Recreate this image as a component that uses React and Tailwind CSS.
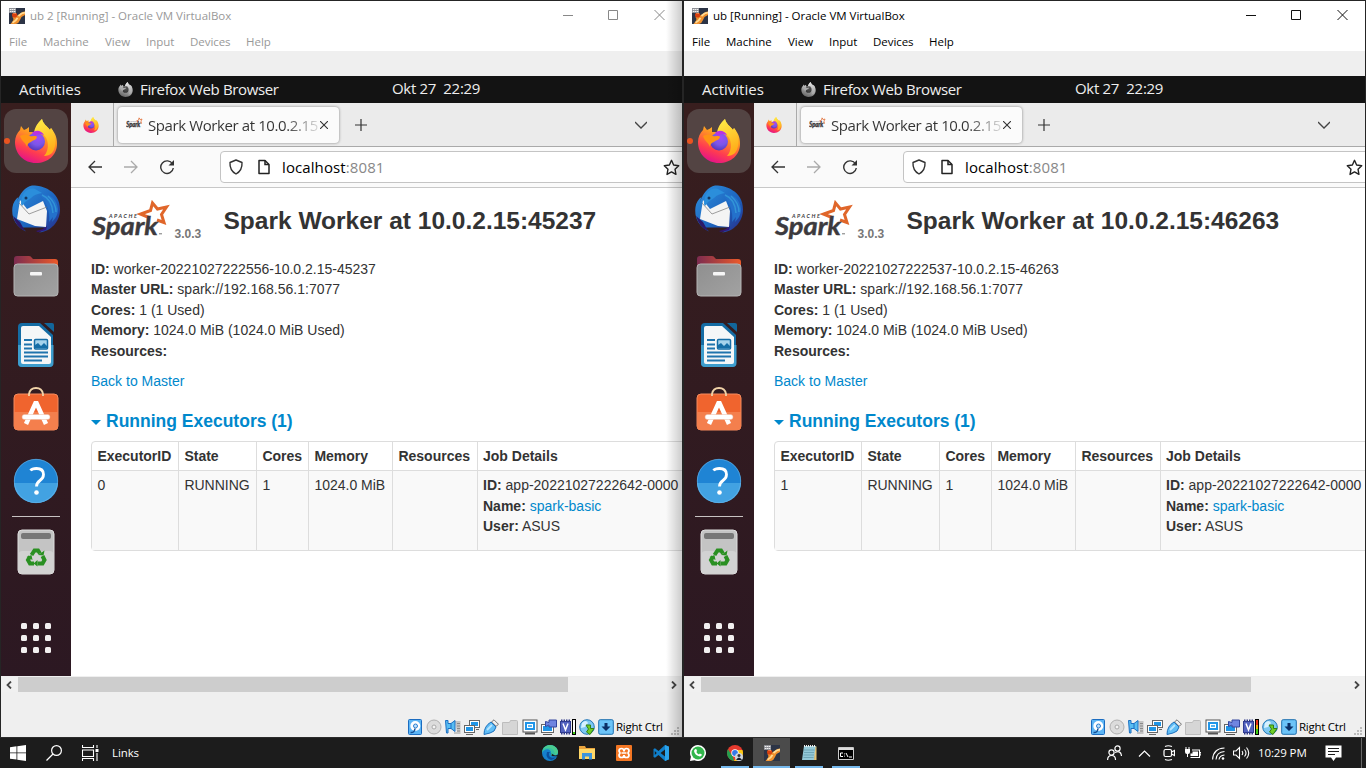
import React from "react";

const UI = "font-['Open_Sans',sans-serif]";

function VBoxIcon() {
  return (
    <svg className="size-4 shrink-0" viewBox="0 0 16 16">
      <rect width="16" height="16" fill="#2c3446" />
      <path d="M16 3.500q-3 0-4.500 2L8 7.500 5.500 9H3.500l1 2q0 2-3 5h5.500q3-1 4-4l1.500-3L16 7z" fill="#f0902e" />
      <path d="M9.500 8l3-2.500L16 4.500M3.500 14.800q3.500-1.800 5-5" stroke="#ffdb93" strokeWidth="1.800" fill="none" />
      <circle cx="5.600" cy="7" r="2.600" fill="#d8400f" />
      <path d="M4.500 5.500q1.500-.8 2.500 0" stroke="#ffa060" strokeWidth=".9" fill="none" />
      <rect x="0" y="0" width="7" height="5" fill="#8d8f95" />
      <path d="M.8 1.500h5.500M.8 3.500h5.500" stroke="#f2f2f2" strokeWidth="1.100" strokeDasharray="1.500 .5" />
    </svg>
  );
}

function Firefox({ size, mono, id }) {
  return (
    <svg className={size} viewBox="0 0 44 44">
      <defs>
        <linearGradient id={"fa" + id} x1=".75" y1="0" x2=".35" y2="1">
          <stop offset="0" stopColor={mono ? "#eee" : "#fff34f"} />
          <stop offset=".4" stopColor={mono ? "#bbb" : "#ff9a20"} />
          <stop offset=".75" stopColor={mono ? "#888" : "#ff3c50"} />
          <stop offset="1" stopColor={mono ? "#666" : "#e3128a"} />
        </linearGradient>
        <radialGradient id={"fb" + id} cx=".6" cy=".3" r=".8">
          <stop offset="0" stopColor={mono ? "#555" : "#a04cf5"} />
          <stop offset=".5" stopColor={mono ? "#444" : "#7a56e8"} />
          <stop offset="1" stopColor={mono ? "#333" : "#4a2fae"} />
        </radialGradient>
        <linearGradient id={"fc" + id} x1="0" y1="0" x2=".3" y2="1">
          <stop offset="0" stopColor={mono ? "#eee" : "#fff04a"} />
          <stop offset="1" stopColor={mono ? "#aaa" : "#ffae1a"} />
        </linearGradient>
      </defs>
      <path d="M28 0c1 5 5 7 8 11l1-2c4 5 6 9 6 16 0 11-9 19-21 19S1 35 1 23c0-5 2-9 5-12l1-4 3 4q3-1 5-3l0 5h6c1-7 4-10 7-13z" fill={`url(#fa${id})`} />
      <path d="M28 0c1 5 5 7 8 11l1-2c4 6 7 17 1 25-2 2-5 3-8 3 6-6 5-19-2-22-3-1-6-2-8 0 0-7 5-12 8-15z" fill={`url(#fc${id})`} />
      <circle cx="22" cy="22.500" r="9" fill={`url(#fb${id})`} />
      <path d="M6 17c4-2 8-2 10 0 3 1 6-1 7 1-1 4-5 3-6 5-4 1-4 5-4 5-1-4-5-5-7-11z" fill={mono ? "#aaa" : "#ff9415"} />
      <path d="M18 14c4-4 10-2 12 2l-4-1q-3 0-5 2z" fill={mono ? "#777" : "#b833e1"} />
    </svg>
  );
}

function Thunderbird() {
  return (
    <svg className="h-12 w-12" viewBox="0 0 48 48">
      <defs>
        <linearGradient id="tb" x1="0" y1="0" x2="1" y2="1">
          <stop offset="0" stopColor="#2f93e0" />
          <stop offset=".6" stopColor="#1c62bd" />
          <stop offset="1" stopColor="#2a2a86" />
        </linearGradient>
      </defs>
      <path d="M20 .5c8-.5 28 4 28 24 0 12-9 22-21 23 3-2 5-3 6-5H10l4 4C4 42-1 33 .5 22c.5-4 3-8 6-10L5 17C8 8 13 2 20 .5z" fill="url(#tb)" />
      <path d="M1 31q3 11 12 15l-5-9z" fill="#2b1968" />
      <path d="M5 34L8 15l7 9 16-8 4 10-1 16-11-1z" fill="#f4f4f4" />
      <path d="M7 18l10 11 18-7" fill="none" stroke="#777" strokeWidth=".7" />
      <path d="M9 19C9 8 16 2 23 4l7 4c-5 1-8 2-11 5l-6 4-3 4z" fill="#2b8edb" />
      <circle cx="14" cy="13" r="1.500" fill="#143763" />
      <path d="M27 10c8-3 18 2 19 14 0 6-3 10-6 13l1-5-4 5q1-9-2-16-3-8-8-11z" fill="#2471cb" />
      <path d="M30 10q10 4 11 18M36 11q8 7 8 16" stroke="#3bacdf" strokeWidth="1.500" fill="none" opacity=".6" />
      <path d="M24 46q7-1 11-5l-1 4-8 2z" fill="#32177a" />
    </svg>
  );
}

function Files() {
  return (
    <svg className="h-[42px] w-[46px]" viewBox="0 0 46 42">
      <defs>
        <linearGradient id="fo" x1="0" y1="0" x2="1" y2="0">
          <stop offset="0" stopColor="#7c2c50" />
          <stop offset="1" stopColor="#ec5a2a" />
        </linearGradient>
        <linearGradient id="fg" x1="0" y1="0" x2="1" y2="1">
          <stop offset="0" stopColor="#8f8f8f" />
          <stop offset="1" stopColor="#a2a2a2" />
        </linearGradient>
      </defs>
      <path d="M1 14V4q0-3 3-3h12q2 0 3 2l1 1h22q3 0 3 3v8z" fill="url(#fo)" />
      <rect x="1" y="9" width="44" height="32" rx="3.500" fill="url(#fg)" stroke="#b5b5b5" strokeWidth="1" />
      <rect x="17" y="17" width="12" height="3.500" rx="1" fill="#f6f6f6" />
    </svg>
  );
}

function Writer() {
  return (
    <svg className="h-[46px] w-[38px]" viewBox="0 0 38 46">
      <path d="M5 1h18l13 12v28q0 4-4 4H5q-4 0-4-4V5q0-4 4-4z" fill="#146ca4" />
      <path d="M1 23h35.500v18q0 4-4 4H5q-4 0-4-4z" fill="#3d9dcd" />
      <path d="M6 4h16l12 11v25q0 2-2 2H6q-2 0-2-2V6q0-2 2-2z" fill="#f5f7f8" />
      <path d="M27 1h8q2 0 2 2v7z" fill="#12669b" />
      <path d="M7 18h8M7 22.500h8M7 26.500h8M7 30.500h24M7 34.500h24M7 38.500h18" stroke="#1f74ad" strokeWidth="1.800" />
      <rect x="17.500" y="17.500" width="13" height="9.500" rx="1" fill="#a6d3ec" stroke="#156da6" strokeWidth="1.500" />
      <path d="M18 26v-3l3-2 3 3 3-3 3 3v2z" fill="#156da6" />
    </svg>
  );
}

function Software() {
  return (
    <svg className="h-11 w-[46px]" viewBox="0 0 46 44">
      <rect x="1" y="7" width="44" height="36" rx="4" fill="#f0642e" stroke="#f58b5e" strokeWidth="1" />
      <path d="M1 25h44v14q0 4-4 4H5q-4 0-4-4z" fill="#f47f4d" />
      <path d="M16 9V7q1-6 7-6t7 6v2" fill="none" stroke="#f1d3a8" strokeWidth="1.800" />
      <path d="M13 37l10-22 10 22" fill="none" stroke="#fff" strokeWidth="4.500" strokeLinejoin="bevel" />
      <rect x="9" y="27.500" width="28" height="5" rx="2.500" fill="#fff" stroke="#e8b59d" strokeWidth=".5" />
    </svg>
  );
}

function Trash() {
  return (
    <svg className="h-[46px] w-[38px]" viewBox="0 0 38 46">
      <rect x="1" y="1" width="36" height="44" rx="4" fill="#c4c4c4" stroke="#dedede" />
      <rect x="1.500" y="22" width="35" height="22.500" rx="4" fill="#d2d2d2" />
      <rect x="4" y="4" width="30" height="6" rx="2" fill="#777" />
      <g fill="none" stroke="#2a9022" strokeWidth="4">
        <path d="M14.500 26l3-4.500h3.500l2 3" />
        <path d="M25.500 27l2 4-2 3.500h-5" />
        <path d="M17 34.500h-4L11 31l2-3.500" />
      </g>
      <path d="M21 26l5.500.5 1-5zM20.500 31v6.500l-4-3zM9.500 28l5-2 1 5z" fill="#2a9022" />
    </svg>
  );
}

function Dock() {
  return (
    <div className="relative flex h-[573px] w-[70px] shrink-0 flex-col items-center bg-linear-to-b from-[#381e1e] to-[#2c1822]">
      <div className="mt-1.5 flex size-16 shrink-0 items-center justify-center rounded-xl bg-[#534443]">
        <Firefox size="h-11 w-11" id="d" />
      </div>
      <i className="absolute top-[35px] left-[3px] size-[6px] rounded-full bg-[#e95420]" />
      <div className="mt-3"><Thunderbird /></div>
      <div className="mt-[22px]"><Files /></div>
      <div className="mt-[25px]"><Writer /></div>
      <div className="mt-[19px]"><Software /></div>
      <svg className="mt-[27px] size-[46px] shrink-0" viewBox="0 0 46 46">
        <circle cx="23" cy="23" r="22" fill="#1f84d4" />
        <path d="M1 25h44a22 20 0 0 1-44 0z" fill="#42a2e2" />
        <circle cx="23" cy="23" r="21.700" fill="none" stroke="#6cb7ea" strokeWidth=".6" />
        <path d="M17.500 12.500q1.500-2 6-2 7 0 7 6 0 3.500-3.500 6-3.500 2.500-3.500 6" fill="none" stroke="#fff" strokeWidth="2.800" />
        <circle cx="23.500" cy="34.500" r="2.300" fill="#fff" />
      </svg>
      <i className="mt-3 h-px w-12 shrink-0 bg-[#c8c2c2]" />
      <div className="mt-3"><Trash /></div>
      <div className="mt-12 grid grid-cols-3 gap-1.5">
        {[0, 1, 2, 3, 4, 5, 6, 7, 8].map((n) => (
          <i key={n} className="size-1.5 rounded-[1.5px] bg-[#f2f0f0]" />
        ))}
      </div>
    </div>
  );
}

function SparkLogo({ size, fit = "xMidYMid", bold = 0.4 }) {
  return (
    <svg className={size} viewBox="0 0 80 42" preserveAspectRatio={fit}>
      <path d="M58 17.500L49.500 14l10-3.500 2-7.500 5 6 9-2-5 7.500 2.500 8L66 20" fill="none" stroke="#e0662a" strokeWidth="3" strokeLinejoin="miter" />
      <text x="18" y="18" fontFamily="Lato" fontWeight="700" fontStyle="italic" fontSize="5.500" fill="#3c3a3e" textLength="28">APACHE</text>
      <text x="1" y="34.500" fontFamily="Lato" fontWeight="700" fontStyle="italic" fontSize="25" fill="#3c3a3e" stroke="#3c3a3e" strokeWidth={bold} textLength="66" lengthAdjust="spacingAndGlyphs">Spark</text>
      <path d="M68 33.800h3" stroke="#777" />
    </svg>
  );
}

function StatusIcons({ active }) {
  const mon = (x, y, w, h) => (
    <g>
      <rect x={x} y={y} width={w} height={h} fill="#fff" stroke="#666" />
      <rect x={x + 1.5} y={y + 1.5} width={w - 3} height={h - 3} fill="#1f95e6" />
    </g>
  );
  return (
    <div className="flex items-center gap-[3.1px]">
      <svg className="size-4" viewBox="0 0 16 16"><rect x="1.500" y=".5" width="13" height="15" rx="1" fill="#5cb5f5" stroke="#1b6cc0" /><circle cx="8.300" cy="7" r="5" fill="#fff" /><circle cx="8.500" cy="7" r="2" fill="#bfe0fa" stroke="#2a7fd0" /><path d="M3.500 13.500q4 .5 4.500-4" stroke="#164f94" strokeWidth="1.500" fill="none" /></svg>
      <svg className="size-4" viewBox="0 0 16 16"><circle cx="8" cy="8" r="7" fill="#dcdcdc" stroke="#b0b0b0" /><circle cx="8" cy="8" r="2" fill="#f5f5f5" stroke="#aaa" /></svg>
      <svg className="size-4" viewBox="0 0 16 16"><path d="M10 2h5.500v13H9v-2h3z" fill="#c4c4c4" /><path d="M12 4.500h3M12 7h3M12 9.500h3M12 12h3" stroke="#8a8a8a" /><path d="M.5 1.500h2.500v3h3l4-3v11l-4-3H3v4.500H1.500z" fill="#58bdf2" stroke="#1c6fc2" /><path d="M6 4.500v5" stroke="#1c6fc2" /></svg>
      <svg className="size-4" viewBox="0 0 16 16">{mon(5.5, 1.5, 10, 7)}{mon(0.5, 6.5, 10, 7)}<path d="M2 15.500h7M12 10.500h3" stroke="#666" /></svg>
      <svg className="size-4" viewBox="0 0 16 16"><path d="M11 .8l4.500 4.500-2.500 2L8.500 3z" fill="#eee" stroke="#777" /><path d="M8 3l5 5q-1 5-6 6l-6 1.500Q1 7 8 3z" fill="#60bdf5" stroke="#1c70bd" /><path d="M4 11l5-5" stroke="#b9e5ff" strokeWidth="1.800" /></svg>
      <svg className="size-4" viewBox="0 0 16 16"><path d="M.5 3.500h7l1-2h6q1 0 1 1v13H.5z" fill="#d6d6d6" stroke="#bdbdbd" /></svg>
      <svg className="size-4" viewBox="0 0 16 16"><rect x="1" y="1" width="14" height="12" fill="#fff" stroke="#555" /><rect x="3" y="3" width="10" height="8" fill="#2095e8" /><rect x="5.500" y="5.500" width="5" height="3" fill="#56b4f2" stroke="#fff" /><path d="M3 14.500h10" stroke="#555" strokeWidth="2" /></svg>
      <svg className="size-4" viewBox="0 0 16 16">{mon(0.5, 5.5, 12, 8)}<path d="M2 15.500h9" stroke="#555" /><path d="M8 1h7.500v7H8V6L4.500 7.500v-5L8 3.500z" fill="#6f85e0" stroke="#34479f" /></svg>
      <svg className="size-4" viewBox="0 0 16 16">
        <path d="M1 1.500h10M1 14.500h10" stroke="#2c3787" strokeWidth="2" strokeDasharray="1.500 1" />
        <rect x=".5" y="2.500" width="10" height="11" fill="#5262bf" stroke="#303c90" />
        <path d="M3 4.500L5.500 11 8 4.500" stroke="#fff" strokeWidth="1.500" fill="none" />
        <rect x="12.500" y=".5" width="3" height="15" fill={active ? "#f0b000" : "#fff"} stroke="#000" />
        {active && <path d="M14 1v5" stroke="#e8301c" strokeWidth="2" />}
        <path d={active ? "M14 10v5" : "M14 13v2"} stroke="#3ccc14" strokeWidth="2" />
      </svg>
      <svg className="size-4" viewBox="0 0 16 16"><circle cx="8" cy="8" r="7.300" fill="#7cc8f2" stroke="#2477b8" /><path d="M3 4q4-4 6 0l-3 4-4 1z" fill="#d6f0ff" /><path d="M7 6h4.500v3.500H15L11 15.500 7.500 13l2-3z" fill="#6fce26" stroke="#338014" /></svg>
      <svg className="size-4" viewBox="0 0 16 16"><rect x=".7" y=".7" width="14.600" height="14.600" rx="1.500" fill="#6cc4f8" stroke="#1d6fae" /><path d="M6.500 4h3v3.500h3L8 12 3.500 7.500h3z" fill="#0b2f66" /></svg>
    </div>
  );
}

function Line({ label, children }) {
  return <div><b>{label}</b>{children ? " " : ""}{children}</div>;
}

function VMWindow({ active, title, port, worker, exec }) {
  const ink = active ? "text-black" : "text-[#999]";
  const stroke = active ? "#111" : "#888";
  const th = "border-r border-[#ddd] pl-[5.4px]";
  return (
    <section className="relative flex h-[737px] w-[683px] flex-col overflow-hidden border-x border-t border-[#252525] bg-[#efefef]">
      <header className={`${UI} ${ink} h-[50px] shrink-0 bg-white`}>
        <div className="flex h-[29px] items-center">
          <div className="flex flex-1 items-center gap-[5px] pl-2">
            <VBoxIcon />
            <span className="text-[11.5px] tracking-[-0.01px] whitespace-nowrap">{title}</span>
          </div>
          <svg className="mr-[17px] h-3 w-[104px]" viewBox="0 0 104 12" fill="none" stroke={stroke}>
            <path d="M2 5.500h10M47.500 .5h9v9h-9zM93.500 0l10 10M103.500 0l-10 10" />
          </svg>
        </div>
        <nav className="flex h-[22px] items-center pt-px pl-2 text-[11.5px]">
          <span className="w-[34px]">File</span>
          <span className="w-[62px]">Machine</span>
          <span className="w-[41px]">View</span>
          <span className="w-[44px]">Input</span>
          <span className="w-[56px] tracking-[-0.05px]">Devices</span>
          <span>Help</span>
        </nav>
      </header>
      <div className={`${UI} mt-[25px] flex h-[27px] shrink-0 items-center bg-[#131313] text-[15px] text-[#eee]`}>
        <span className="w-[117px] pl-[18px]">Activities</span>
        <Firefox size="h-[15px] w-[15px]" mono id="m" />
        <span className="w-[259px] pl-[7px] tracking-[-0.36px]">Firefox Web Browser</span>
        <span className="pb-0.5 tracking-[-0.3px] whitespace-pre">Okt 27  22:29</span>
      </div>
      <div className="flex h-[573px] shrink-0">
        <Dock />
        <main className="flex w-[611px] flex-col overflow-hidden bg-white">
          <div className="flex h-11 shrink-0 items-center border-b border-[#a9a9a9] bg-[#ebebeb]">
            <div className="flex h-full w-[43px] items-center border-r border-[#aaa] pl-3">
              <Firefox size="h-4 w-4" id="t" />
            </div>
            <div className="ml-1 flex h-9 w-[221px] items-center rounded bg-[#fbfbfb] pl-2 shadow-[0_0_3px_rgba(0,0,0,.45)]">
              <SparkLogo size="h-3 w-[17px] shrink-0 mb-1" fit="none" bold={1.5} />
              <span className={`${UI} mt-0.5 ml-[5px] w-[171px] shrink-0 overflow-hidden bg-linear-to-r from-[#333] from-80% to-transparent to-103% bg-clip-text text-[15px] tracking-[-0.4px] whitespace-nowrap text-transparent`}>Spark Worker at 10.0.2.15</span>
              <svg className="ml-px size-2 shrink-0" viewBox="0 0 8 8"><path d="M0 0l8 8M8 0L0 8" stroke="#333" strokeWidth="1.100" /></svg>
            </div>
            <svg className="ml-4 size-3" viewBox="0 0 12 12"><path d="M6 0v12M0 6h12" stroke="#333" strokeWidth="1.200" /></svg>
            <svg className="ml-[268px] h-2 w-3" viewBox="0 0 12 8"><path d="M0 1l6 6 6-6" stroke="#444" strokeWidth="1.300" fill="none" /></svg>
          </div>
          <div className="flex h-[41px] shrink-0 items-center border-b border-[#c8c8c8] bg-[#fafafa]">
            <svg className="ml-[17px] h-4 w-[14px] shrink-0" viewBox="0 0 14 16" fill="none" stroke="#333" strokeWidth="1.300"><path d="M14 8H1M7 2L1 8l6 6" /></svg>
            <svg className="ml-[22px] h-4 w-[14px] shrink-0" viewBox="0 0 14 16" fill="none" stroke="#aaa" strokeWidth="1.300"><path d="M0 8h13M7 2l6 6-6 6" /></svg>
            <svg className="ml-[21px] size-4 shrink-0" viewBox="0 0 16 16" fill="none" stroke="#333" strokeWidth="1.400"><path d="M13.500 5A6.300 6.300 0 1 0 14.300 9" /><path d="M15 1v5.500H9.500z" fill="#333" stroke="none" /></svg>
            <div className="ml-[45px] flex h-8 w-[500px] shrink-0 items-center rounded border border-[#c4c4c4] bg-white pl-[7px]">
              <svg className="size-4 shrink-0" viewBox="0 0 16 16" fill="none" stroke="#333" strokeWidth="1.400"><path d="M8 1l6 2.500q.5 8-6 11.500-6.500-3.500-6-11.500z" strokeLinejoin="round" /></svg>
              <svg className="ml-3 size-4 shrink-0" viewBox="0 0 16 16" fill="none" stroke="#222" strokeWidth="1.500"><path d="M3 1.500h6l4 4v9H3z" strokeLinejoin="round" /><path d="M9 1.500v4h4" /></svg>
              <span className={`${UI} ml-2.5 w-[381px] text-[15px] tracking-[0.1px] text-black`}>localhost<span className="text-[#888]">:8081</span></span>
              <svg className="size-[17px] shrink-0" viewBox="0 0 16 16">
                <path d="M8 1.200l2 4.500 4.800.6-3.500 3.300.9 4.900L8 12.100l-4.200 2.400.9-4.900L1.200 6.300 6 5.700z" fill="none" stroke="#222" strokeWidth="1.300" strokeLinejoin="round" />
              </svg>
            </div>
          </div>
          <article className="w-[740px] pl-5 font-['Liberation_Sans',Arial,sans-serif] text-sm leading-[20.4px] text-[#333]">
            <div className="flex h-[71px] items-start pt-3">
              <SparkLogo size="h-[42px] w-20" />
              <span className="mt-6 ml-[3.5px] w-[49px] text-xs leading-5 font-bold text-[#777]">3.0.3</span>
              <h1 className="text-[24.5px] leading-[42px] font-bold">Spark Worker at 10.0.2.15:{port}</h1>
            </div>
            <div>
              <Line label="ID:">{worker}</Line>
              <Line label="Master URL:">spark://192.168.56.1:7077</Line>
              <Line label="Cores:">1 (1 Used)</Line>
              <Line label="Memory:">1024.0 MiB (1024.0 MiB Used)</Line>
              <Line label="Resources:" />
            </div>
            <p className="mt-[10px] text-[#0088cc]">Back to Master</p>
            <h2 className="mt-5 flex items-center text-[17.5px] leading-[21px] font-bold text-[#0088cc]">
              <svg className="mt-0.5 mr-[5px] h-[5px] w-2.5" viewBox="0 0 10 5"><path d="M0 0h10L5 5z" fill="#0088cc" /></svg>
              Running Executors (1)
            </h2>
            <div className="mt-[9px] rounded border border-[#ddd]">
              <div className="grid h-7 grid-cols-[87px_78px_52px_84px_85px_1fr] leading-7 font-bold">
                <span className={th}>ExecutorID</span>
                <span className={th}>State</span>
                <span className={th}>Cores</span>
                <span className={th}>Memory</span>
                <span className={th}>Resources</span>
                <span className="pl-[5px]">Job Details</span>
              </div>
              <div className="grid h-20 grid-cols-[87px_78px_52px_84px_85px_1fr] border-t border-[#ddd] bg-[#f9f9f9] *:pt-1">
                <span className={th}>{exec}</span>
                <span className={th}>RUNNING</span>
                <span className={th}>1</span>
                <span className={th}>1024.0 MiB</span>
                <span className={th} />
                <div className="pl-[5px]">
                  <Line label="ID:">app-20221027222642-0000</Line>
                  <Line label="Name:"><span className="text-[#0088cc]">spark-basic</span></Line>
                  <Line label="User:">ASUS</Line>
                </div>
              </div>
            </div>
          </article>
        </main>
      </div>
      <div className="mt-px flex h-[15px] shrink-0 items-center bg-[#f0f0f0]">
        <svg className="mr-[6px] ml-[5px] h-2 w-1.5" viewBox="0 0 6 8"><path d="M5 .5L1.500 4 5 7.500" stroke="#444" strokeWidth="1.800" fill="none" /></svg>
        <div className="h-full w-[550px] bg-[#cdcdcd]" />
        <svg className="ml-[103px] h-2 w-1.5" viewBox="0 0 6 8"><path d="M1 .5L4.500 4 1 7.500" stroke="#444" strokeWidth="1.800" fill="none" /></svg>
      </div>
      <footer className="flex flex-1 items-end pb-[2px] pl-[406px]">
        <StatusIcons active={active} />
        <span className={`${UI} ml-0.5 w-[47px] text-[11.5px] leading-4 tracking-[-0.25px] whitespace-nowrap text-black`}>Right Ctrl</span>
        <svg className="ml-2 size-2 shrink-0" viewBox="0 0 8 8" fill="#bbb"><path d="M6 0h2v2H6zM3 3h2v2H3zM6 3h2v2H6zM0 6h2v2H0zM3 6h2v2H3zM6 6h2v2H6z" /></svg>
      </footer>
      {!active && <div className="absolute inset-y-0 right-0 w-4 bg-linear-to-r from-transparent to-black/20" />}
    </section>
  );
}

function Slot({ children, running, focused }) {
  return (
    <div className={`flex h-full w-[37px] flex-col items-center ${focused ? "bg-[#4b4b4b]" : ""}`}>
      <div className="flex flex-1 items-center pt-0.5">{children}</div>
      <div className={`h-0.5 ${focused ? "w-full" : "w-7"} ${running ? "bg-[#76b9ed]" : ""}`} />
    </div>
  );
}

function Taskbar() {
  return (
    <div className={`${UI} flex h-[31px] items-center border-t border-[#2b2b2b] bg-[#1c1c1c] text-white`}>
      <svg className="ml-2.5 size-4" viewBox="0 0 16 16" fill="#fff"><path d="M0 2.200L6.500 1.300v6.200H0zM7.300 1.200L16 0v7.500H7.300zM0 8.300h6.500v6.300L0 13.700zM7.300 8.300H16V16l-8.700-1.200z" /></svg>
      <svg className="ml-5 size-4" viewBox="0 0 16 16" fill="none" stroke="#fff" strokeWidth="1.200"><circle cx="10.500" cy="5.500" r="4.900" /><path d="M7 9L.5 15.500" /></svg>
      <svg className="ml-5 h-4 w-[17px]" viewBox="0 0 17 16" fill="none" stroke="#fff" strokeWidth="1.100"><path d="M.5 0v2.500h11V0M.5 5h11v6.500H.5zM.5 16v-2.500h11V16M15 0v3M15 8v8" /><path d="M13.500 4h3v3h-3z" fill="#fff" stroke="none" /></svg>
      <span className="ml-[13px] w-[419px] text-[11.5px] tracking-[-0.1px]">Links</span>
      <Slot>
        <svg className="size-4" viewBox="0 0 16 16"><circle cx="8" cy="8" r="8" fill="#1580cc" /><path d="M0 8C0 2 5 0 8 0c5 0 8 4 8 7 0 3-3 4-5 4-3 0-2-1-2-3 0-5-7-5-9 0z" fill="#35c1a3" /><path d="M1 4Q4 0 8 0c5 0 8 4 8 7 0 2-2 3-3 3 0-6-6-9-12-6z" fill="#50ce8a" opacity=".8" /><path d="M5 7q-2 6 4 8 3 0 5-3-6 2-7-2-.5-2 1-3z" fill="#0b4f9d" /><path d="M8.500 8q2 0 1 3l6.500.5v-1.500l-3 .5z" fill="#1c1c1c" /></svg>
      </Slot>
      <Slot>
        <svg className="size-4" viewBox="0 0 16 16"><path d="M0 1h6l1 2h9v11H0z" fill="#e8a33d" /><path d="M0 4h16v10H0z" fill="#ffd868" /><path d="M3 14.500V8h10v6.500h-3v-3H6v3z" fill="#3d94dc" /></svg>
      </Slot>
      <Slot>
        <svg className="size-4" viewBox="0 0 16 16"><rect width="16" height="16" rx="1" fill="#f37623" /><path d="M8 6.500h0Q8 3.500 5.500 3.500T3 6l1 2-1 2q0 2.500 2.500 2.500T8 10q0 2.500 2.500 2.500T13 10l-1-2 1-2q0-2.500-2.500-2.500T8 6.500zM5.500 8h5" fill="none" stroke="#fff" strokeWidth="1.700" /></svg>
      </Slot>
      <Slot>
        <svg className="size-4" viewBox="0 0 16 16"><path d="M12 0l4 1.800v12.400L12 16 5.500 10 2 12.700.5 11.900V4.100L2 3.300 5.500 6z" fill="#0f7fcb" /><path d="M12 4.500v7L7.500 8zM1.800 6v4l2-2z" fill="#1c1c1c" /><path d="M12 0l4 1.800v12.400L12 16z" fill="#2ba3ea" /></svg>
      </Slot>
      <Slot>
        <svg className="size-4" viewBox="0 0 16 16"><path d="M8 0a8 8 0 1 1-3.500 15.200L0 16l.9-4.300A8 8 0 0 1 8 0z" fill="#fff" /><circle cx="8" cy="8" r="6.500" fill="#31b64b" /><path d="M5 4.200l1.200-.1.900 2-.8 1q1 1.800 2.600 2.500l1-1 2 1q-.3 2-2 2-5-.8-5.900-5.500 0-1 1-1.900z" fill="#fff" /></svg>
      </Slot>
      <Slot running>
        <svg className="size-4" viewBox="0 0 16 16"><circle cx="8" cy="8" r="8" fill="#e63a2e" /><path d="M1 4.200L6 12l1 4A8 8 0 0 1 1 4.200z" fill="#22a04e" /><path d="M8 5h7.400A8 8 0 0 1 7 16l4-6z" fill="#fbc916" /><circle cx="8" cy="8" r="3.700" fill="#fff" /><circle cx="8" cy="8" r="2.900" fill="#3579e8" /><circle cx="12" cy="12" r="4" fill="#cfd6df" /><circle cx="12" cy="10.500" r="1.500" fill="#333" /><path d="M9 15q3-5 6 0z" fill="#151c2c" /></svg>
      </Slot>
      <Slot running focused><VBoxIcon /></Slot>
      <Slot running>
        <svg className="size-4" viewBox="0 0 16 16"><path d="M3 1h12l-1.500 14H1z" fill="#94c9d8" /><path d="M14.500 1.500h1V15H13z" fill="#e4c477" /><path d="M3 5h10.500M3 7.500h10M2.500 10h10.500M2.500 12.500h10" stroke="#5f96a8" strokeWidth=".7" /><path d="M3 1h12" stroke="#eee" strokeWidth="2" strokeDasharray="1 1" /></svg>
      </Slot>
      <Slot running>
        <svg className="h-[13px] w-4" viewBox="0 0 16 13"><path d="M.5.500h15v12H.5z" fill="#000" stroke="#ccc" /><path d="M1 1h14v2H1z" fill="#ddd" /><path d="M5 6H2.500v3.500H5M6.500 6.500v.8M6.500 8.700v.8M8 6l2 4M11 10h3" stroke="#fff" strokeWidth="1" fill="none" /></svg>
      </Slot>
      <svg className="ml-[243px] h-4 w-[15px]" viewBox="0 0 15 16" fill="none" stroke="#fff" strokeWidth="1.200"><circle cx="10.500" cy="3.500" r="2.600" /><circle cx="4.500" cy="7.500" r="2.600" /><path d="M.6 15q0-4.500 4-4.500T8.500 15M8 7.500q6-2.500 6.500 3.500" /></svg>
      <svg className="ml-4 h-[7px] w-[13px]" viewBox="0 0 13 7" fill="none" stroke="#fff" strokeWidth="1.200"><path d="M1 6.500l5.500-5.500 5.500 5.500" /></svg>
      <svg className="ml-3 h-4 w-3" viewBox="0 0 12 16" fill="none" stroke="#fff" strokeWidth="1.200"><rect x="1" y="4.500" width="7.500" height="7" rx="1.500" /><path d="M8.500 7l3-1.500v5l-3-1.500M2 1.500q3-1.500 7 0M2 14.500q3 1.500 7 0" /></svg>
      <svg className="ml-2.5 h-3.5 w-4" viewBox="0 0 16 14" fill="none" stroke="#fff"><path d="M7 4h7.500v7.500H5.500M14.500 6.500H16v2.500h-1.500" strokeWidth="1.100" /><path d="M7.500 5.500h5.500V10H5.500V7.500h2zM0 3h5v3q0 2-2 2v3H2V8Q0 8 0 6zM.5 1h1v2h-1zM3.500 1h1v2h-1z" fill="#fff" stroke="none" /></svg>
      <svg className="ml-[11px] size-[13px]" viewBox="0 0 13 13" fill="none" stroke="#fff" strokeWidth="1.100"><path d="M.6 12.500Q1 1.500 12.500 1M4 12.500Q4.500 5 12.500 4.500M7 12.500q.5-4 5.500-4.500" /><circle cx="11" cy="11.500" r="1.300" fill="#fff" stroke="none" /></svg>
      <svg className="ml-2 h-3.5 w-[17px]" viewBox="0 0 17 14" fill="none" stroke="#fff" strokeWidth="1.100"><path d="M.5 5h2.500l3.500-3.500v11L3 9H.5zM9 5q1.500 2 0 4M11.500 3.500q3 3.500 0 7M13.500 1.500q4.500 5.500 0 11" /></svg>
      <span className="ml-2 w-[67px] text-[11.500px] tracking-[-0.12px] whitespace-nowrap">10:29 PM</span>
      <svg className="h-4 w-[17px]" viewBox="0 0 17 16"><path d="M.5.500h16v12H11L8.500 16 6 12.500H.5z" fill="#fff" /><path d="M3 3.500h11M3 6.500h11M3 9.500h7" stroke="#1c1c1c" strokeWidth="1.200" /></svg>
      <i className="ml-auto h-full w-px bg-[#666]" />
      <i className="h-full w-1" />
    </div>
  );
}

export default function App() {
  return (
    <div className="h-[768px] w-[1366px] overflow-hidden bg-[#1c1c1c]">
      <div className="flex">
        <VMWindow title="ub 2 [Running] - Oracle VM VirtualBox" port="45237" worker="worker-20221027222556-10.0.2.15-45237" exec="0" />
        <VMWindow active title="ub [Running] - Oracle VM VirtualBox" port="46263" worker="worker-20221027222537-10.0.2.15-46263" exec="1" />
      </div>
      <Taskbar />
    </div>
  );
}
